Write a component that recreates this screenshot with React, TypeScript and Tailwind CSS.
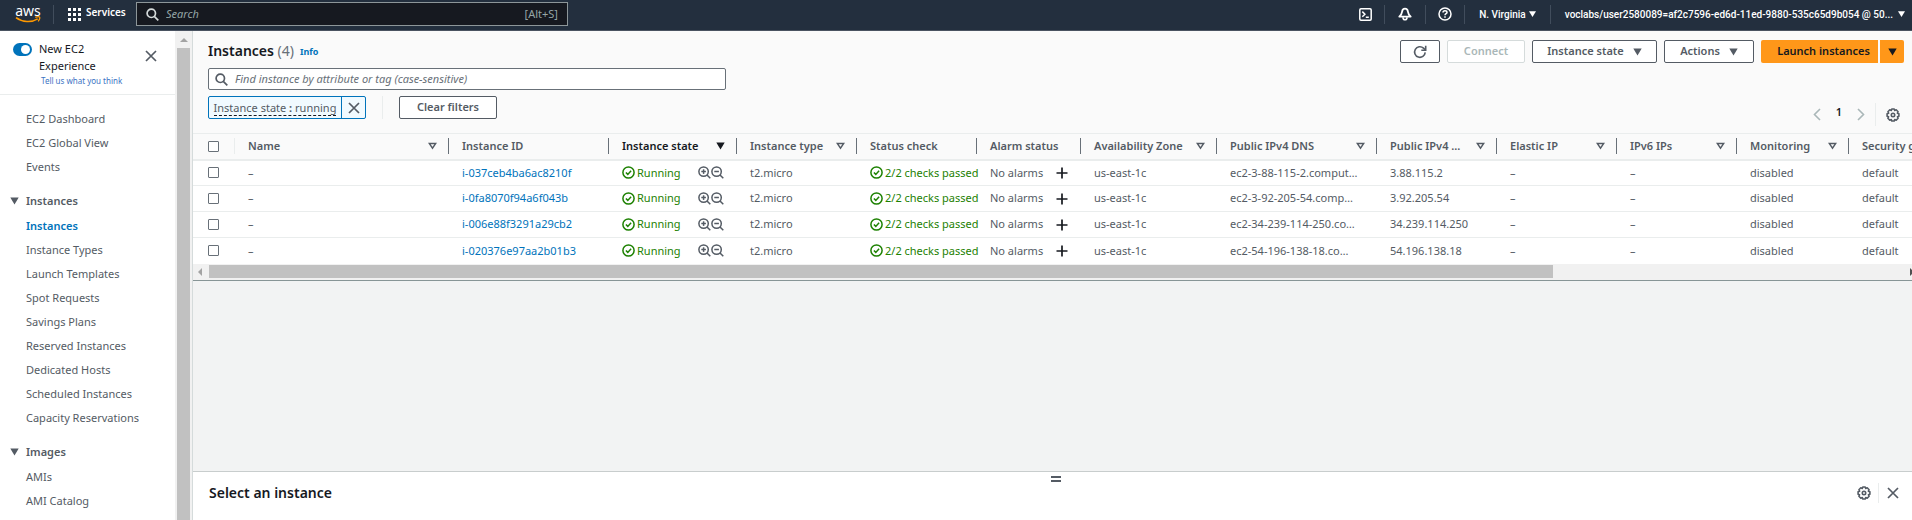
import React from "react";

type IconProps = { className?: string };

const CaretDown = ({ className = "" }: IconProps) => (
  <svg viewBox="0 0 9 8" className={`h-2 w-[9px] shrink-0 ${className}`} fill="currentColor" aria-hidden="true">
    <path d="M0.3 0.6h8.4L4.5 7.4z" />
  </svg>
);

const SmallCaret = () => (
  <svg viewBox="0 0 7 6" className="h-[6px] w-[7px] shrink-0" fill="currentColor" aria-hidden="true">
    <path d="M0 0.200h7L3.500 6z" />
  </svg>
);

const FilterCaret = () => (
  <svg viewBox="0 0 9 8" className="h-2 w-[9px] shrink-0" fill="none" stroke="currentColor" strokeWidth="1.5" aria-hidden="true">
    <path d="M1.4 1.6h6.200L4.500 6.200z" />
  </svg>
);

const SearchIcon = ({ className = "" }: IconProps) => (
  <svg viewBox="0 0 13 13" className={`size-[13px] shrink-0 ${className}`} fill="none" stroke="currentColor" strokeWidth="1.7" aria-hidden="true">
    <circle cx="5.3" cy="5.3" r="4.2" />
    <path d="M8.3 8.3l4 4" />
  </svg>
);

const CloseIcon = ({ className = "" }: IconProps) => (
  <svg viewBox="0 0 12 12" className={`size-3 shrink-0 ${className}`} fill="none" stroke="currentColor" strokeWidth="1.7" aria-hidden="true">
    <path d="M1 1l10 10M11 1L1 11" />
  </svg>
);

const GearIcon = () => (
  <svg viewBox="0 0 14 14" className="size-[14px] shrink-0" fill="none" stroke="currentColor" strokeWidth="1.6" aria-hidden="true">
    <path strokeLinejoin="round" d="M5.8 1h2.4l.5 1.4 1.5-.6 1.9 1.9-.7 1.5 1.5.6v2.4l-1.5.5.7 1.6-1.9 1.9-1.5-.7L8.200 13H5.800l-.5-1.500-1.500.7-1.900-1.900.7-1.600L1.100 8.200V5.800l1.500-.6-.7-1.500 1.900-1.900 1.500.6z" />
    <circle cx="7" cy="7" r="1.7" />
  </svg>
);

const CheckCircle = () => (
  <svg viewBox="0 0 13 13" className="size-[13px] shrink-0" fill="none" stroke="currentColor" strokeWidth="1.5" aria-hidden="true">
    <circle cx="6.500" cy="6.500" r="5.600" />
    <path d="M3.900 6.500l1.900 1.900 3.300-3.600" />
  </svg>
);

const ZoomGlyph = ({ plus }: { plus?: boolean }) => (
  <svg viewBox="0 0 13 13" className="size-[13px] shrink-0" fill="none" stroke="currentColor" strokeWidth="1.5" aria-hidden="true">
    <circle cx="5.600" cy="5.600" r="4.700" />
    <path d="M9 9l3.300 3.300M3.300 5.600h4.600" />
    {plus && <path d="M5.600 3.300v4.600" />}
  </svg>
);

const PlusIcon = () => (
  <svg viewBox="0 0 12 12" className="size-3 shrink-0" fill="none" stroke="currentColor" strokeWidth="1.700" aria-hidden="true">
    <path d="M6 0.500v11M0.500 6h11" />
  </svg>
);

const RefreshIcon = () => (
  <svg viewBox="0 0 14 14" className="size-[14px]" fill="none" stroke="currentColor" strokeWidth="1.600" aria-hidden="true">
    <path d="M12.200 7.400a5.300 5.300 0 1 1-1.700-4.300l1.900 1.900" />
    <path d="M12.700 0.700v4.500H8.300" />
  </svg>
);

const Chevron = ({ right }: { right?: boolean }) => (
  <svg viewBox="0 0 8 13" className="h-[13px] w-2" fill="none" stroke="currentColor" strokeWidth="1.600" aria-hidden="true">
    <path d={right ? "M1 1l5.500 5.500L1 12" : "M7 1L1.500 6.500 7 12"} />
  </svg>
);

const TopDivider = () => <span className="h-[19px] w-px bg-[#414d5c]" />;

function TopBar() {
  return (
    <header className="flex h-[31px] shrink-0 items-center border-b border-[#4a5361] bg-[#232f3e] pb-[2px] text-[11px] text-white">
      <a href="#home" aria-label="aws" className="ml-[15px] flex w-[26px] flex-col items-center">
        <span className="text-[14px] leading-[10px]">aws</span>
        <svg viewBox="0 0 26 7" className="h-[7px] w-[26px]" fill="none" stroke="#ff9900" aria-hidden="true">
          <path strokeWidth="1.600" d="M1 1.600c6.500 4.800 15.500 5.200 21.700 1.300" />
          <path strokeWidth="1.300" d="M20.300 1.300c2-.7 3.900-.7 4.300-.1.300.6-.3 2.800-1.500 4.200" />
        </svg>
      </a>
      <div className="ml-3 flex items-center">
        <TopDivider />
      </div>
      <button type="button" className="ml-[14px] flex items-center gap-[5px] text-[10px] font-semibold">
        <svg viewBox="0 0 13 13" className="size-[13px]" fill="currentColor" aria-hidden="true">
          {[0, 5, 10].map((y) => [0, 5, 10].map((x) => <rect key={`${x}-${y}`} x={x} y={y} width="3" height="3" />))}
        </svg>
        <span className="w-[38px] pb-[3px] text-left">Services</span>
      </button>
      <label className="ml-3 flex h-6 w-[432px] items-center border border-[#8d9699] bg-[#161920] px-[9px] font-normal text-[#95a5a6]">
        <SearchIcon className="text-[#d5dbdb]" />
        <input aria-label="Search" placeholder="Search" className="ml-[7px] min-w-0 flex-1 bg-transparent italic outline-none placeholder:text-[#95a5a6]" />
        <span>[Alt+S]</span>
      </label>
      <div className="ml-auto flex items-center font-['Roboto',sans-serif] text-[10px] font-medium">
        <button type="button" aria-label="CloudShell" className="mr-[12px]">
          <svg viewBox="0 0 13 13" className="size-[13px]" fill="none" stroke="currentColor" strokeWidth="1.500" aria-hidden="true">
            <rect x="0.800" y="0.800" width="11.400" height="11.400" rx="1.200" />
            <path d="M3.300 3.600l2.600 2.600-2.600 2.600M6.800 9.300h3" />
          </svg>
        </button>
        <TopDivider />
        <button type="button" aria-label="Notifications" className="mx-[13px]">
          <svg viewBox="0 0 14 14" className="size-[14px]" fill="none" stroke="currentColor" strokeWidth="1.800" strokeLinejoin="round" aria-hidden="true">
            <path d="M7 1.700C5.200 1.700 4.300 3 4.100 4.600 3.900 6.600 3 8 1.300 9.600h11.400C11 8 10.100 6.600 9.900 4.600 9.700 3 8.800 1.700 7 1.700z" />
            <path d="M5 10.200a2 2.600 0 0 0 4 0" strokeWidth="1.600" />
          </svg>
        </button>
        <TopDivider />
        <button type="button" aria-label="Help" className="mx-3">
          <svg viewBox="0 0 14 14" className="size-[14px]" fill="none" stroke="currentColor" strokeWidth="1.500" aria-hidden="true">
            <circle cx="7" cy="7" r="6" />
            <path d="M5 5.600c0-1.200.8-1.900 2-1.900s2 .7 2 1.700c0 1.300-2 1.300-2 2.900M7 9.300v1.500" />
          </svg>
        </button>
        <TopDivider />
        <button type="button" className="mr-[14px] ml-[14px] flex items-center gap-[3px]">
          N. Virginia
          <SmallCaret />
        </button>
        <TopDivider />
        <button type="button" className="mr-[7px] ml-[14px] flex items-center gap-[5px]">
          voclabs/user2580089=af2c7596-ed6d-11ed-9880-535c65d9b054 @ 50...
          <SmallCaret />
        </button>
      </div>
    </header>
  );
}

const navTop = ["EC2 Dashboard", "EC2 Global View", "Events"];
const navGroups = [
  {
    title: "Instances",
    items: [
      "Instances",
      "Instance Types",
      "Launch Templates",
      "Spot Requests",
      "Savings Plans",
      "Reserved Instances",
      "Dedicated Hosts",
      "Scheduled Instances",
      "Capacity Reservations",
    ],
  },
  { title: "Images", items: ["AMIs", "AMI Catalog"] },
];

function Sidebar() {
  return (
    <aside className="flex w-[193px] shrink-0 overflow-hidden border-r border-[#d5dbdb] text-[11px] text-[#545b64]">
      <div className="min-w-0 flex-1 bg-white">
        <div className="flex h-16 items-start border-b border-[#eaeded] pt-[9px] pr-[18px] pl-[13px]">
          <label className="mt-[3px] flex h-[13px] w-[19px] shrink-0 items-center justify-end rounded-full bg-[#0073bb] px-[2px]">
            <input type="checkbox" defaultChecked aria-label="New EC2 Experience" className="size-[9px] appearance-none rounded-full bg-white" />
          </label>
          <div className="ml-[7px] flex-1 leading-[17px] text-[#16191f]">
            New EC2
            <br />
            Experience
            <a href="#feedback" className="ml-[2px] block text-[8px] leading-[14px] text-[#3b73c4]">
              Tell us what you think
            </a>
          </div>
          <button type="button" aria-label="Close navigation" className="mt-[10px] text-[#545b64]">
            <CloseIcon />
          </button>
        </div>
        <nav className="pt-3">
          {navTop.map((t) => (
            <a key={t} href="#nav" className="block pl-[26px] leading-6">
              {t}
            </a>
          ))}
          {navGroups.map((g) => (
            <div key={g.title} className="pt-[9px]">
              <button type="button" className="flex w-full items-center pl-[10px] leading-[26px] font-semibold">
                <CaretDown className="mr-[7px]" />
                {g.title}
              </button>
              {g.items.map((t) => (
                <a
                  key={t}
                  href="#nav"
                  className={t === "Instances" ? "block pl-[26px] leading-6 font-semibold text-[#0073bb]" : "block pl-[26px] leading-6"}
                >
                  {t}
                </a>
              ))}
            </div>
          ))}
        </nav>
      </div>
      <div className="flex w-[17px] flex-col items-center bg-[#f1f1f1] pt-[7px]">
        <svg viewBox="0 0 8 4" className="h-1 w-2" fill="#a3a3a3" aria-hidden="true">
          <path d="M4 0l4 4H0z" />
        </svg>
        <div className="mt-[6px] w-[13px] flex-1 bg-[#c1c1c1]" />
      </div>
    </aside>
  );
}

const outline = "flex h-[23px] items-center justify-center rounded-[2px] border bg-white font-semibold";

function Toolbar() {
  return (
    <div className="px-2 pt-[9px] pl-[15px] text-[11px] text-[#545b64]">
      <div className="flex h-[23px] items-center gap-[6px]">
        <h1 className="pb-[2px] text-[14px] font-semibold text-[#16191f]">
          Instances <span className="font-normal text-[#687078]">(4)</span>
        </h1>
        <a href="#info" className="text-[9px] font-bold text-[#0073bb]">
          Info
        </a>
        <div className="ml-auto flex gap-[7px]">
          <button type="button" aria-label="Refresh" className={`${outline} w-10 border-[#545b64]`}>
            <RefreshIcon />
          </button>
          <button type="button" disabled className={`${outline} w-[78px] border-[#d5dbdb] text-[#aab7b8]`}>
            Connect
          </button>
          <button type="button" className={`${outline} w-[125px] gap-[9px] border-[#545b64]`}>
            Instance state
            <CaretDown />
          </button>
          <button type="button" className={`${outline} w-[90px] gap-[9px] border-[#545b64]`}>
            Actions
            <CaretDown />
          </button>
          <div className="flex gap-[2px] font-semibold text-[#16191f]">
            <button type="button" className="h-[23px] w-[117px] rounded-l-[2px] bg-[#ff9719] pl-2">
              Launch instances
            </button>
            <button type="button" aria-label="More launch options" className="flex h-[23px] w-6 items-center justify-center rounded-r-[2px] bg-[#ff9719]">
              <CaretDown />
            </button>
          </div>
        </div>
      </div>
      <label className="mt-[5px] flex h-[22px] w-[518px] items-center rounded-[2px] border border-[#687078] bg-white pl-[6px]">
        <SearchIcon />
        <input
          aria-label="Find instance"
          placeholder="Find instance by attribute or tag (case-sensitive)"
          className="ml-[7px] min-w-0 flex-1 italic outline-none placeholder:text-[#687078]"
        />
      </label>
      <div className="flex h-[43px] items-start pt-[6px]">
        <div className="flex h-[23px] w-[158px] rounded-[2px] border border-[#0073bb] bg-[#f1faff]">
          <span className="flex flex-1 items-center justify-center">
            <button type="button" className="border-b border-dashed border-[#16191f] leading-[15px]">
              Instance state <b>:</b> running
            </button>
          </span>
          <button type="button" aria-label="Remove filter" className="flex w-6 items-center justify-center border-l border-[#0073bb]">
            <CloseIcon />
          </button>
        </div>
        <span className="mx-4 h-[23px] w-px bg-[#eaeded]" />
        <button type="button" className={`${outline} w-[98px] border-[#545b64]`}>
          Clear filters
        </button>
        <div className="mt-[7px] ml-auto flex h-[23px] items-center pr-1">
          <button type="button" aria-label="Previous page" className="text-[#aab7b8]">
            <Chevron />
          </button>
          <span className="w-9 pb-1 text-center text-[11px] font-semibold text-[#16191f]">1</span>
          <button type="button" aria-label="Next page" className="text-[#aab7b8]">
            <Chevron right />
          </button>
          <span className="mx-[10px] h-[23px] w-px bg-[#eaeded]" />
          <button type="button" aria-label="Preferences">
            <GearIcon />
          </button>
        </div>
      </div>
    </div>
  );
}

type Column = { label: string; width: string; sort?: "none" | "active" };

const columns: Column[] = [
  { label: "Name", width: "w-[214px]", sort: "none" },
  { label: "Instance ID", width: "w-[160px]" },
  { label: "Instance state", width: "w-[128px]", sort: "active" },
  { label: "Instance type", width: "w-[120px]", sort: "none" },
  { label: "Status check", width: "w-[120px]" },
  { label: "Alarm status", width: "w-[104px]" },
  { label: "Availability Zone", width: "w-[136px]", sort: "none" },
  { label: "Public IPv4 DNS", width: "w-[160px]", sort: "none" },
  { label: "Public IPv4 ...", width: "w-[120px]", sort: "none" },
  { label: "Elastic IP", width: "w-[120px]", sort: "none" },
  { label: "IPv6 IPs", width: "w-[120px]", sort: "none" },
  { label: "Monitoring", width: "w-[112px]", sort: "none" },
  { label: "Security group name", width: "w-[168px]", sort: "none" },
];

const rows = [
  { id: "i-037ceb4ba6ac8210f", dns: "ec2-3-88-115-2.comput…", ip: "3.88.115.2" },
  { id: "i-0fa8070f94a6f043b", dns: "ec2-3-92-205-54.comp…", ip: "3.92.205.54" },
  { id: "i-006e88f3291a29cb2", dns: "ec2-34-239-114-250.co…", ip: "34.239.114.250" },
  { id: "i-020376e97aa2b01b3", dns: "ec2-54-196-138-18.co…", ip: "54.196.138.18" },
];

const box = "block size-[11px] appearance-none rounded-[1px] border border-[#687078] bg-white";

function InstancesTable() {
  return (
    <div className="overflow-hidden">
      <table className="w-[1824px] table-fixed border-collapse text-left text-[11px] whitespace-nowrap text-[#545b64]">
        <thead>
          <tr className="h-[26px] border-t border-b-2 border-[#eaeded]">
            <th className="w-[42px] pl-[15px]">
              <div className="flex items-center justify-between">
                <input type="checkbox" aria-label="Select all instances" className={box} />
                <span className="h-4 w-px bg-[#eaeded]" />
              </div>
            </th>
            {columns.map((c) => (
              <th key={c.label} className={`${c.width} pl-[13px] font-semibold`}>
                <div className={c.sort === "active" ? "flex items-center text-[#16191f]" : "flex items-center"}>
                  <span className="flex-1">{c.label}</span>
                  {c.sort === "none" && <FilterCaret />}
                  {c.sort === "active" && <CaretDown />}
                  <span className="ml-[11px] h-4 w-px bg-[#687078]" />
                </div>
              </th>
            ))}
          </tr>
        </thead>
        <tbody className="bg-white">
          {rows.map((r) => (
            <tr key={r.id} className="h-[26px] border-b border-[#eaeded] last:border-b-0 [&>td]:pl-[13px]">
              <td>
                <input type="checkbox" aria-label={`Select ${r.id}`} className={`${box} ml-[2px]`} />
              </td>
              <td>–</td>
              <td>
                <a href="#instance" className="text-[#0073bb]">
                  {r.id}
                </a>
              </td>
              <td>
                <div className="flex items-center gap-[2px] text-[#1d8102]">
                  <CheckCircle />
                  Running
                  <button type="button" aria-label="Filter by running" className="ml-auto text-[#545b64]">
                    <ZoomGlyph plus />
                  </button>
                  <button type="button" aria-label="Exclude running" className="-ml-[2px] mr-[13px] text-[#545b64]">
                    <ZoomGlyph />
                  </button>
                </div>
              </td>
              <td>t2.micro</td>
              <td>
                <div className="flex items-center gap-[2px] text-[#1d8102]">
                  <CheckCircle />
                  2/2 checks passed
                </div>
              </td>
              <td>
                <div className="flex items-center justify-between pr-[13px]">
                  No alarms
                  <button type="button" aria-label="Add alarm" className="text-[#16191f]">
                    <PlusIcon />
                  </button>
                </div>
              </td>
              <td>us-east-1c</td>
              <td>{r.dns}</td>
              <td>{r.ip}</td>
              <td>–</td>
              <td>–</td>
              <td>disabled</td>
              <td>default</td>
            </tr>
          ))}
        </tbody>
      </table>
      <div className="flex h-[17px] items-center border-b border-[#879596] bg-[#f1f1f1] pl-[5px]">
        <svg viewBox="0 0 4 8" className="h-2 w-1" fill="#a3a3a3" aria-hidden="true">
          <path d="M4 0v8L0 4z" />
        </svg>
        <div className="ml-[7px] flex h-[13px] flex-1">
          <div className="w-[79%] bg-[#c1c1c1]" />
        </div>
        <svg viewBox="0 0 2 8" className="h-2 w-[2px]" fill="#505050" aria-hidden="true">
          <path d="M0 0l2 2v4L0 8z" />
        </svg>
      </div>
    </div>
  );
}

function DetailPanel() {
  return (
    <section className="flex h-[49px] flex-col border-t border-[#c8cdcd] bg-white text-[#545b64]">
      <div className="flex h-[10px] justify-center pt-1 pl-[6px]">
        <span className="h-[6px] w-[10px] border-y-2 border-[#545b64]" />
      </div>
      <div className="flex h-[22px] items-center pr-[13px] pl-4">
        <h2 className="pb-[2px] text-[14px] font-semibold text-[#16191f]">Select an instance</h2>
        <button type="button" aria-label="Panel preferences" className="ml-auto">
          <GearIcon />
        </button>
        <span className="mr-2 ml-[7px] h-5 w-px bg-[#eaeded]" />
        <button type="button" aria-label="Close panel">
          <CloseIcon />
        </button>
      </div>
    </section>
  );
}

export default function App() {
  return (
    <div className="flex h-screen flex-col overflow-hidden bg-[#f2f3f3] font-['Noto_Sans',sans-serif]">
      <TopBar />
      <div className="flex min-h-0 flex-1">
        <Sidebar />
        <main className="flex min-w-0 flex-1 flex-col">
          <div className="bg-[#fafafa]">
            <Toolbar />
            <InstancesTable />
          </div>
          <div className="flex-1" />
          <DetailPanel />
        </main>
      </div>
    </div>
  );
}
